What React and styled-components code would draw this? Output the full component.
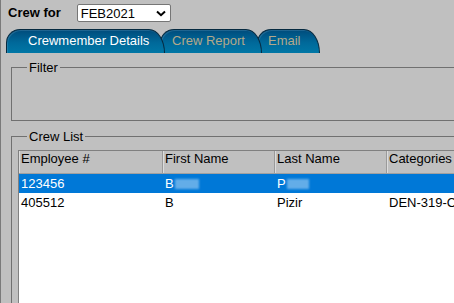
import React from "react";
import styled, { createGlobalStyle } from "styled-components";

const Global = createGlobalStyle`
  html, body { margin: 0; padding: 0; overflow: hidden; }
  body {
    background: #c0c0c0;
    font-family: "Liberation Sans", Arial, sans-serif;
    font-size: 13px;
    color: #000;
  }
  #root { height: 303px; }
`;

const Page = styled.div`
  height: 303px;
  width: 520px;
  box-sizing: border-box;
  border-left: 1px solid #7a7a7a;
  overflow: hidden;
`;

const TopBar = styled.div`
  display: flex;
  align-items: center;
  gap: 16px;
  padding: 4px 0 0 7px;
  height: 18px;
`;

const Label = styled.span`
  font-weight: bold;
  font-size: 13px;
  line-height: 18px;
`;

const Select = styled.div`
  box-sizing: border-box;
  width: 94px;
  height: 18px;
  background: #fff;
  border: 1px solid #767676;
  border-radius: 2px;
  display: flex;
  align-items: center;
  justify-content: space-between;
  padding: 0 4px 0 3px;
  font-size: 13px;
`;

const Tabs = styled.div`
  display: flex;
  margin-top: 7px;
  padding-left: 5px;
  height: 24px;
`;

const Tab = styled.div`
  position: relative;
  z-index: ${(p) => p.$z};
  box-sizing: border-box;
  width: ${(p) => p.$w}px;
  height: 24px;
  margin-left: ${(p) => (p.$first ? 0 : -5)}px;
  padding-left: ${(p) => p.$pad}px;
  padding-top: 3px;
  border: 1px solid #062a40;
  border-bottom: none;
  border-radius: 14px 16px 0 0 / 14px 24px 0 0;
  background: linear-gradient(#004c7c, #00699a 55%, #0077a6);
  box-shadow: inset 1px 1px 0 rgba(120, 170, 200, 0.25);
  color: ${(p) => (p.$active ? "#ffffff" : "#b3a98a")};
  font-size: 13px;
  line-height: 16px;
  white-space: nowrap;
`;

const Fieldset = styled.fieldset`
  box-sizing: border-box;
  margin: ${(p) => p.$mt}px 0 0 10px;
  padding: ${(p) => p.$pt}px 0 0 6px;
  border: 1px solid #707070;
  width: 500px;
  min-width: 0;
`;

const Legend = styled.legend`
  margin-left: 9px;
  padding: 0 2px;
  font-size: 13px;
  line-height: 15px;
`;

const FilterBody = styled.div`
  height: 45px;
`;

const Table = styled.div`
  border-left: 1px solid #808080;
  border-top: 1px solid #808080;
  background: #fff;
  height: 160px;
  width: 480px;
`;

const Row = styled.div`
  display: grid;
  grid-template-columns: 144px 112px 112px 1fr;
  height: ${(p) => (p.$header ? 22 : 19)}px;
  background: ${(p) => (p.$header ? "#c0c0c0" : p.$selected ? "#0078d7" : "#ffffff")};
  color: ${(p) => (p.$selected ? "#ffffff" : "#000000")};
  border-bottom: ${(p) => (p.$header ? "1px solid #a0a0a0" : "none")};
`;

const Cell = styled.div`
  box-sizing: border-box;
  padding-left: 2px;
  font-size: 13px;
  line-height: ${(p) => (p.$header ? 15 : 18)}px;
  padding-top: ${(p) => (p.$header ? 0 : 1)}px;
  white-space: nowrap;
  overflow: hidden;
  border-right: ${(p) => (p.$header ? "1px solid #9a9a9a" : "none")};
  box-shadow: ${(p) => (p.$header ? "inset 1px 0 0 #dcdcdc" : "none")};
`;

const Blur = styled.span`
  display: inline-block;
  width: ${(p) => p.$w}px;
  height: 10px;
  margin-left: 1px;
  vertical-align: -1px;
  background: #63ade8;
  filter: blur(1.2px);
`;

const Chevron = () => (
  <svg width="10" height="7" viewBox="0 0 10 7">
    <path d="M1 1.5 L5 5.2 L9 1.5" fill="none" stroke="#000" strokeWidth="2" />
  </svg>
);

export default function App() {
  return (
    <Page>
      <Global />
      <TopBar>
        <Label>Crew for</Label>
        <Select>
          <span>FEB2021</span>
          <Chevron />
        </Select>
      </TopBar>
      <Tabs>
        <Tab $first $active $z={3} $w={159} $pad={21}>Crewmember Details</Tab>
        <Tab $z={2} $w={102} $pad={11}>Crew Report</Tab>
        <Tab $z={1} $w={63} $pad={10}>Email</Tab>
      </Tabs>
      <Fieldset $mt={7} $pt={0}>
        <Legend>Filter</Legend>
        <FilterBody />
      </Fieldset>
      <Fieldset $mt={8} $pt={6}>
        <Legend>Crew List</Legend>
        <Table>
          <Row $header>
            <Cell $header>Employee #</Cell>
            <Cell $header>First Name</Cell>
            <Cell $header>Last Name</Cell>
            <Cell $header>Categories</Cell>
          </Row>
          <Row $selected>
            <Cell>123456</Cell>
            <Cell>B<Blur $w={24} /></Cell>
            <Cell>P<Blur $w={22} /></Cell>
            <Cell></Cell>
          </Row>
          <Row>
            <Cell>405512</Cell>
            <Cell>B</Cell>
            <Cell>Pizir</Cell>
            <Cell>DEN-319-CA</Cell>
          </Row>
        </Table>
      </Fieldset>
    </Page>
  );
}
